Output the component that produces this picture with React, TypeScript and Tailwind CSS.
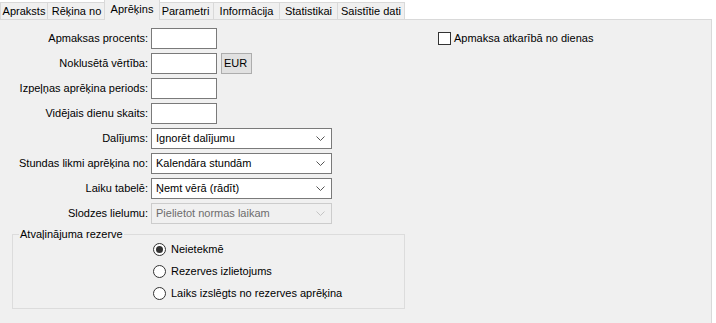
import React from "react";

const tabs = [
  { label: "Apraksts", w: "w-[48px]" },
  { label: "Rēķina no", w: "w-[58px]" },
  { label: "Aprēķins", w: "w-[56px]", active: true },
  { label: "Parametri", w: "w-[56px]" },
  { label: "Informācija", w: "w-[66px]" },
  { label: "Statistikai", w: "w-[58px]" },
  { label: "Saistītie dati", w: "w-[67px]" },
];

const Chevron = ({ disabled }: { disabled?: boolean }) => (
  <svg width="9" height="5" viewBox="0 0 9 5" className="ml-auto mr-[6px]">
    <path d="M0.5 0.5 L4.5 4.5 L8.5 0.5" fill="none" stroke={disabled ? "#c4c4c4" : "#555"} strokeWidth="1" />
  </svg>
);

const TextBox = () => <div className="w-[66px] h-[21px] border border-[#7a7a7a] bg-white" />;

const Select = ({ value, disabled }: { value: string; disabled?: boolean }) => (
  <div
    className={
      disabled
        ? "w-[181px] h-[21px] border border-[#cccccc] bg-[#f0f0f0] text-[#6d6d6d] flex items-center pl-[4px]"
        : "w-[181px] h-[21px] border border-[#7a7a7a] bg-white flex items-center pl-[4px]"
    }
  >
    <span>{value}</span>
    <Chevron disabled={disabled} />
  </div>
);

const Radio = ({ label, checked }: { label: string; checked?: boolean }) => (
  <div className="flex items-center h-[16px] gap-[5px]">
    <div className="w-[13px] h-[13px] rounded-full border border-[#333] bg-white flex items-center justify-center">
      {checked && <div className="w-[7px] h-[7px] rounded-full bg-[#333]" />}
    </div>
    <span>{label}</span>
  </div>
);

export default function App() {
  return (
    <div className="w-[716px] h-[323px] bg-white overflow-hidden text-[11px] leading-[13px] text-black font-['Liberation_Sans',Arial,sans-serif]">
      <div className="flex h-[19px] items-end">
        {tabs.map((t, i) =>
          t.active ? (
            <div
              key={t.label}
              className={`${t.w} h-[21px] -mx-[2px] -mb-px relative z-10 bg-[#f0f0f0] border border-b-0 border-[#d9d9d9] flex justify-center pt-[3px]`}
            >
              {t.label}
            </div>
          ) : (
            <div
              key={t.label}
              className={`${t.w} h-[17px] bg-[#f0f0f0] border-t border-r border-[#d9d9d9] ${i === 0 ? "border-l" : ""} flex items-center justify-center`}
            >
              {t.label}
            </div>
          )
        )}
      </div>
      <div className="w-[712px] h-[304px] bg-[#f0f0f0] border-t border-r border-[#d9d9d9] pt-[8px]">
        <div className="flex">
          <div className="grid grid-cols-[148px_auto] gap-x-[3px] gap-y-[4px] items-center">
            <span className="text-right">Apmaksas procents:</span>
            <TextBox />
            <span className="text-right">Noklusētā vērtība:</span>
            <div className="flex gap-[4px]">
              <TextBox />
              <div className="w-[31px] h-[21px] bg-[#e1e1e1] border border-[#adadad] flex items-center pl-[2px]">EUR</div>
            </div>
            <span className="text-right">Izpeļņas aprēķina periods:</span>
            <TextBox />
            <span className="text-right">Vidējais dienu skaits:</span>
            <TextBox />
            <span className="text-right">Dalījums:</span>
            <Select value="Ignorēt dalījumu" />
            <span className="text-right">Stundas likmi aprēķina no:</span>
            <Select value="Kalendāra stundām" />
            <span className="text-right">Laiku tabelē:</span>
            <Select value="Ņemt vērā (rādīt)" />
            <span className="text-right">Slodzes lielumu:</span>
            <Select value="Pielietot normas laikam" disabled />
          </div>
          <div className="ml-[106px] h-[21px] flex items-center gap-[3px]">
            <div className="w-[13px] h-[13px] border border-[#333] bg-white" />
            <span>Apmaksa atkarībā no dienas</span>
          </div>
        </div>
        <fieldset className="ml-[12px] mt-[4px] w-[393px] h-[81px] border border-[#dcdcdc]">
          <legend className="ml-[6px] px-px">Atvaļinājuma rezerve</legend>
          <div className="pl-[140px] flex flex-col gap-[6px]">
            <Radio label="Neietekmē" checked />
            <Radio label="Rezerves izlietojums" />
            <Radio label="Laiks izslēgts no rezerves aprēķina" />
          </div>
        </fieldset>
      </div>
    </div>
  );
}
